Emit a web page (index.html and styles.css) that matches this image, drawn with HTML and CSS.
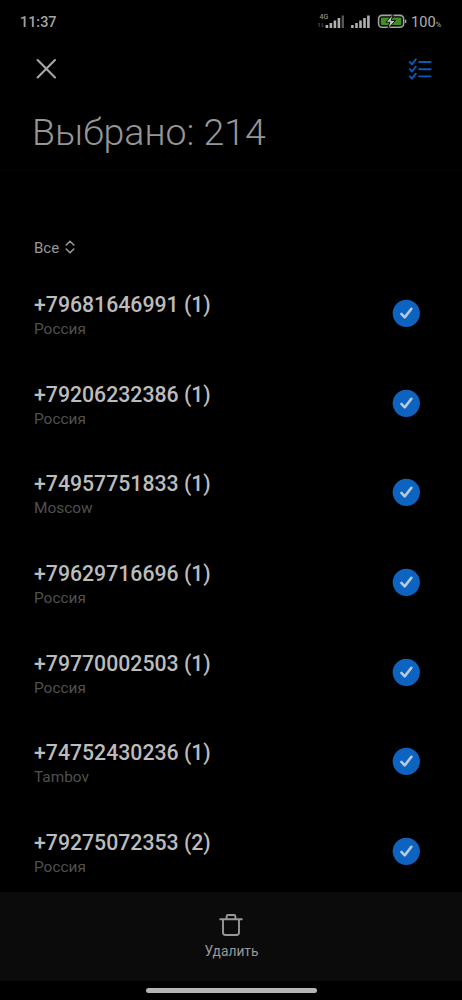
FILE: index.html
```
<!DOCTYPE html>
<html lang="ru">
<head>
<meta charset="utf-8">
<title>Выбрано: 214</title>
<link rel="stylesheet" href="styles.css">
</head>
<body>
<svg class="defs" width="0" height="0"><defs>
<symbol id="check" viewBox="0 0 28 28"><circle cx="14.3" cy="14.3" r="13.6" fill="#0c64c0"/><path d="M9.4 14.9l3.3 3.5 6.7-8.6" fill="none" stroke="#b9c9dc" stroke-width="2.6" stroke-linecap="round" stroke-linejoin="round"/></symbol>
</defs></svg>
<div class="screen">
  <div class="status">
    <span class="time">11:37</span>
    <svg class="signals" width="90" height="20" viewBox="0 0 90 20">
      <text class="net" x="2.6" y="7">4G</text>
      <path d="M2.2 15v-4M1 12.4l1.2-1.4M5.2 11v4M6.4 13.6l-1.2 1.4" stroke="#444" fill="none"/>
      <path d="M9.9 16v-3M13.9 16v-5M17.9 16V8.5M21.9 16V6" stroke="#b0b0b0" stroke-width="2.6"/>
      <path d="M25.8 16V3.5" stroke="#555" stroke-width="2.4"/>
      <path d="M35.4 16v-3M39.5 16v-5M43.5 16V8.5M47.5 16V6M51.4 16V3.5" stroke="#b0b0b0" stroke-width="2.6"/>
      <rect x="61.6" y="3.4" width="25" height="11.8" rx="3.5" fill="none" stroke="#a0a5a0" stroke-width="1.6"/>
      <rect x="63.8" y="5.6" width="20.6" height="7.4" rx="1.2" fill="#3f8f22"/>
      <path d="M88.6 7.6v3.4" stroke="#a0a0a0" stroke-width="1.5"/>
      <path d="M76.6 1.8l-7.8 8.4h4l-2.2 7 8-8.8h-4.4z" fill="#c4c4c4" stroke="#071005"/>
    </svg>
    <span class="level">100<small>%</small></span>
  </div>
  <header class="actions">
    <svg width="22" height="22" viewBox="0 0 22 22"><path d="M2.6 2l17.4 17.4M20 2L2.6 19.4" stroke="#a8a8a8" stroke-width="2.1" stroke-linecap="round"/></svg>
    <svg width="26" height="24" viewBox="0 0 26 24" fill="none" stroke="#0d5bb0" stroke-width="1.9" stroke-linecap="round" stroke-linejoin="round"><path d="M2.8 5l2.1 2.3 3.9-5M2.8 12.2l2.1 2.3 3.9-5M2.8 19.4l2.1 2.3 3.9-5M12.2 5h11.4M12.2 12.2h11.4M12.2 19.4h11.4"/></svg>
  </header>
  <h1 class="title">Выбрано: 214</h1>
  <div class="filter">Все <svg width="10" height="14" viewBox="0 0 10 14"><path d="M1.2 5L5 1.3 8.8 5M1.2 9L5 12.7 8.8 9" fill="none" stroke="#999" stroke-width="1.6" stroke-linecap="round"/></svg></div>
  <main class="list">
    <div class="row"><div class="entry"><div class="num">+79681646991 (1)</div><div class="place">Россия</div></div><svg class="check"><use href="#check"/></svg></div>
    <div class="row"><div class="entry"><div class="num">+79206232386 (1)</div><div class="place">Россия</div></div><svg class="check"><use href="#check"/></svg></div>
    <div class="row"><div class="entry"><div class="num">+74957751833 (1)</div><div class="place">Moscow</div></div><svg class="check"><use href="#check"/></svg></div>
    <div class="row"><div class="entry"><div class="num">+79629716696 (1)</div><div class="place">Россия</div></div><svg class="check"><use href="#check"/></svg></div>
    <div class="row"><div class="entry"><div class="num">+79770002503 (1)</div><div class="place">Россия</div></div><svg class="check"><use href="#check"/></svg></div>
    <div class="row"><div class="entry"><div class="num">+74752430236 (1)</div><div class="place">Tambov</div></div><svg class="check"><use href="#check"/></svg></div>
    <div class="row"><div class="entry"><div class="num">+79275072353 (2)</div><div class="place">Россия</div></div><svg class="check"><use href="#check"/></svg></div>
  </main>
  <footer class="toolbar">
    <svg width="24" height="24" viewBox="0 0 24 24" fill="none" stroke="#989898" stroke-width="1.9" stroke-linecap="round" stroke-linejoin="round"><path d="M1.2 6.2h21.6M7.6 6V3.4Q7.6 2 9 2h6q1.4 0 1.4 1.4V6M4 6.4v13.1Q4 22 6.5 22h11q2.5 0 2.5-2.5V6.4"/></svg>
    <span>Удалить</span>
  </footer>
  <div class="nav"><div class="handle"></div></div>
</div>
</body>
</html>
```
FILE: styles.css
```
body { margin: 0; background: #000; font-family: Roboto, sans-serif; }
svg { display: block; flex: none; }
.defs { position: absolute; }
.screen { width: 462px; height: 1000px; display: flex; flex-direction: column; overflow: hidden; background: #000; }
.status { height: 44px; flex: none; box-sizing: border-box; padding: 0 20px; display: flex; align-items: center; color: #a4a4a4; font-size: 14.4px; font-weight: 500; }
.time { margin-right: auto; }
.signals { margin-right: 4px; }
.net { font-size: 7px; fill: #aaa; font-weight: 400; }
.level { font-weight: 400; font-size: 14.6px; color: #b0b0b0; width: 31px; white-space: nowrap; }
.level small { font-size: 8px; }
.actions { height: 50px; flex: none; padding: 0 29px 0 35px; display: flex; align-items: center; justify-content: space-between; }
.title { margin: 0; padding: 13px 0 0 32px; height: 77px; box-sizing: border-box; flex: none; line-height: 50px; font-size: 37.5px; font-weight: 300; color: #969696; white-space: nowrap; border-bottom: 1px solid #040404; }
.filter { height: 97px; flex: none; padding-left: 34px; display: flex; align-items: flex-start; gap: 6px; line-height: 18px; font-size: 15px; color: #999; box-sizing: border-box; padding-top: 68px; }
.filter svg { margin-top: 1px; }
.list { height: 624px; overflow: hidden; flex: none; display: flex; flex-direction: column; }
.row { height: 89.7px; flex: none; box-sizing: border-box; padding: 0 42px 0 34px; display: flex; align-items: center; justify-content: space-between; }
.entry { padding-top: 4px; }
.num { font-size: 21.25px; line-height: 28px; font-weight: 500; color: #bcbcbc; white-space: nowrap; }
.place { font-size: 15.4px; line-height: 20px; color: #505050; }
.check { width: 28px; height: 28px; }
.toolbar { height: 89px; box-sizing: border-box; padding-top: 21px; flex: none; display: flex; flex-direction: column; align-items: center; gap: 5px; background: #0b0b0b; color: #999; font-size: 13.8px; line-height: 18px; }
.toolbar span { padding-left: 1px; }
.nav { height: 19px; display: flex; justify-content: center; padding-top: 7px; box-sizing: border-box; }
.handle { width: 171px; height: 5px; border-radius: 3px; background: #b5b5b5; }
```
